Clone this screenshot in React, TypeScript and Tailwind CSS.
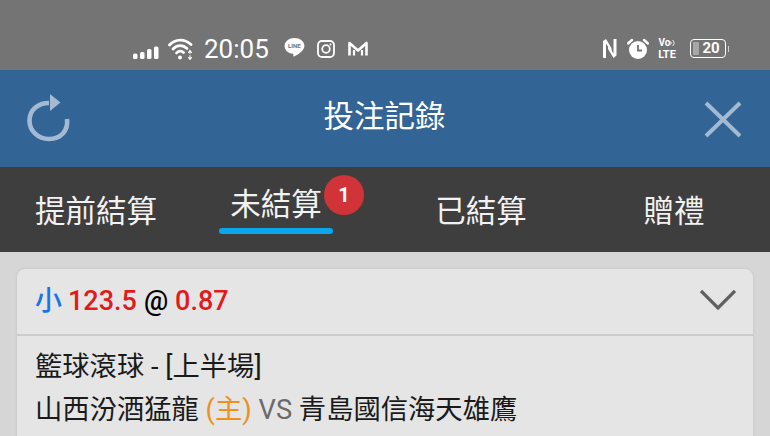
import React from 'react';

const cjk = "font-['Roboto','Noto_Sans_CJK_TC','Noto_Sans',sans-serif]";

const SignalBars = () => (
  <svg width="26" height="14" viewBox="0 0 26 14" fill="white">
    <rect x="0" y="8.500" width="4.500" height="5.500" rx="1.500" />
    <rect x="7" y="7" width="4.500" height="7" rx="1.500" />
    <rect x="14" y="4" width="4.500" height="10" rx="1.500" />
    <rect x="21" y="1.500" width="4.500" height="12.500" rx="1.500" />
  </svg>
);

const Wifi = () => (
  <svg width="26" height="22" viewBox="0 0 26 22" fill="none" stroke="white" strokeLinecap="round">
    <path d="M1.500 7C7.500 .5 16.500 .5 23 6.500" strokeWidth="2.800" />
    <path d="M5 11C9 6.500 15 6.500 19 10.500" strokeWidth="2.800" />
    <path d="M8.500 15C10.500 12.500 13.500 12.500 15.500 14.500" strokeWidth="2.800" />
    <circle cx="12" cy="19.500" r="2" fill="white" stroke="none" />
    <path d="M22 12.500v3M20.500 14.500l1.500-2 1.500 2M22 17.500v3.500M20.500 19.500l1.500 2 1.500-2" strokeWidth="1.100" />
  </svg>
);

const LineIcon = () => (
  <div className="relative w-[21px] h-[23px] shrink-0">
    <svg width="21" height="23" viewBox="0 0 20 22" fill="white" className="absolute inset-0">
      <path d="M10 1C4.800 1 .5 4.300 .5 8.600c0 3.800 3.400 6.900 8 7.500.6 .2 .5 .8 .4 1.600-.1 .8 .1 1.200 .9 .9 2.400-1.200 9.700-5.300 9.700-10C19.500 4.300 15.200 1 10 1z" />
    </svg>
    <span className="absolute left-0 top-[6px] w-full text-center text-[6px] leading-[6px] font-bold text-[#747474] font-['Roboto',sans-serif]">LINE</span>
  </div>
);

const Instagram = () => (
  <svg width="18" height="18" viewBox="0 0 18 18" fill="none" stroke="white" strokeWidth="1.800">
    <rect x="1" y="1" width="16" height="16" rx="4" />
    <circle cx="9" cy="9" r="3.800" />
    <circle cx="13.500" cy="4.500" r="1" fill="white" stroke="none" />
  </svg>
);

const MailM = () => (
  <svg width="20" height="16" viewBox="0 0 20 16" fill="none" stroke="white" strokeWidth="2.600" strokeLinejoin="round">
    <path d="M1.500 14.500V2L10 9.500 18.500 2v12.500" />
    <path d="M6 14.500V9M14 14.500V9" strokeWidth="2.200" />
  </svg>
);

const NfcN = () => (
  <svg width="14" height="21" viewBox="0 0 14 21" fill="white">
    <path d="M0 3 3 1 8.500 10V14L3 5.500V20H0z" />
    <path d="M13.500 1V17.500L10.500 20 5 11V7L10.500 15.500V1z" />
  </svg>
);

const Alarm = () => (
  <svg width="22" height="22" viewBox="0 0 22 22">
    <circle cx="11" cy="12" r="9" fill="white" />
    <path d="M1 5.500 5 2M21 5.500 17 2" stroke="white" strokeWidth="2.400" strokeLinecap="round" />
    <path d="M11 7v5.500h4" fill="none" stroke="#747474" strokeWidth="1.800" />
  </svg>
);

const VolteIcon = () => (
  <div className="flex flex-col items-center w-[20px] font-['Roboto',sans-serif] font-bold text-white shrink-0">
    <div className="flex items-start h-[10px] text-[10px] leading-[10px]">
      <span>Vo</span>
      <svg width="5" height="10" viewBox="0 0 5 10" fill="none" stroke="white" strokeWidth="1">
        <path d="M.5 6.500c1-1 1-2 0-3M2.500 8c2-2 2-4 0-6" />
      </svg>
    </div>
    <span className="text-[11px] leading-[10px] mt-[2px]">LTE</span>
  </div>
);

const Battery = () => (
  <div className="flex items-center shrink-0">
    <div className="relative w-[36px] h-[19px] rounded-[4px] border-[1.500px] border-white flex items-center justify-center overflow-hidden">
      <div className="absolute left-[2px] top-[2px] bottom-[2px] w-[6px] bg-[#a8a8a8] rounded-[1px]" />
      <span className="relative pl-[6px] text-[15px] leading-none font-bold text-white font-['Roboto',sans-serif]">20</span>
    </div>
    <div className="w-[1px] h-[6px] ml-[2px] bg-[#cfcfcf]" />
  </div>
);

const tabs = [
  { label: '提前結算', col: 'w-[192px]' },
  { label: '未結算', col: 'w-[168px]', active: true },
  { label: '已結算', col: 'w-[242px]' },
  { label: '贈禮', col: 'w-[144px]' },
];

export default function App() {
  return (
    <div className={`w-[770px] h-[436px] overflow-hidden bg-[#d6d6d6] ${cjk}`}>
      {/* Status bar */}
      <div className="h-[70px] bg-[#747474] flex items-center justify-between pl-[133px] pr-[41px] pt-[27px]">
        <div className="flex items-center">
          <div className="pt-[6px]"><SignalBars /></div>
          <div className="ml-[9px]"><Wifi /></div>
          <span className="ml-[10px] text-[26px] leading-none text-white">20:05</span>
          <div className="ml-[15px]"><LineIcon /></div>
          <div className="ml-[12px]"><Instagram /></div>
          <div className="ml-[13px]"><MailM /></div>
        </div>
        <div className="flex items-center">
          <NfcN />
          <div className="ml-[10px]"><Alarm /></div>
          <div className="ml-[8px]"><VolteIcon /></div>
          <div className="ml-[13px]"><Battery /></div>
        </div>
      </div>

      {/* Header */}
      <div className="h-[97px] bg-[#326496] flex items-center pl-[27px] pr-[28px]">
        <svg width="46" height="50" viewBox="0 0 46 50" fill="none" className="-mt-[1px] shrink-0">
          <path d="M40 26c1.500 12-6.500 20-18 20C11 46 2.500 38 2.500 27.500 2.500 17 11 10 22 10" stroke="#a3bad2" strokeWidth="4.600" />
          <path d="M23 1 33.500 9.500 23 18z" fill="#a3bad2" />
        </svg>
        <span className="flex-1 text-center pr-[8px] -mt-[2px] text-[30.500px] leading-none text-white">投注記錄</span>
        <svg width="38" height="38" viewBox="0 0 38 38" stroke="#a3bad2" strokeWidth="4" className="shrink-0">
          <path d="M2 3 36 36M36 3 2 36" />
        </svg>
      </div>

      {/* Tabs */}
      <div className="h-[85px] bg-[#3e3e3e] flex items-start">
        {tabs.map((t) => (
          <div key={t.label} className={`${t.col} relative flex flex-col items-center ${t.active ? 'pt-[20px]' : 'pt-[27px]'}`}>
            <span className="text-[30.500px] leading-[36px] text-[#f2f2f2]">{t.label}</span>
            {t.active && (
              <>
                <div className="mt-[5px] w-[114px] h-[6px] rounded-full bg-[#0ba5ec]" />
                <div className="absolute left-[132px] top-[8px] w-[40px] h-[40px] rounded-full bg-[#d13438] flex items-center justify-center text-white font-bold text-[20px] leading-none">
                  1
                </div>
              </>
            )}
          </div>
        ))}
      </div>

      {/* Bet card */}
      <div className="pt-[17px] px-[17px]">
        <div className="h-[200px] rounded-t-[8px] bg-[#e5e5e5] shadow-[0_0_3px_rgba(0,0,0,0.1)]">
          <div className="h-[67px] border-b-[2px] border-[#cccccc] flex items-center justify-between pl-[18px] pr-[17px] pb-[1px]">
            <div className="flex items-center text-[27px] leading-none font-medium">
              <span className="text-[#1a73e8]">小</span>
              <span className="ml-[6px] text-[#e21a1a]">123.5</span>
              <span className="ml-[7px] text-black">@</span>
              <span className="ml-[7px] text-[#e21a1a]">0.87</span>
            </div>
            <svg width="36" height="22" viewBox="0 0 36 22" fill="none" stroke="#606060" strokeWidth="3.200" className="-mt-[2px]">
              <path d="M1 2 18 19 35 2" />
            </svg>
          </div>
          <div className="pl-[18px] pt-[10px] text-[27.300px] leading-[43px] text-[#1a1a1a]">
            <div>
              籃球滾球 - [上半場]
            </div>
            <div className="whitespace-nowrap">
              山西汾酒猛龍 <span className="text-[#ee8f1e]">(主)</span> <span className="text-[#6b6b6b]">VS</span> 青島國信海天雄鷹
            </div>
          </div>
        </div>
      </div>
    </div>
  );
}
